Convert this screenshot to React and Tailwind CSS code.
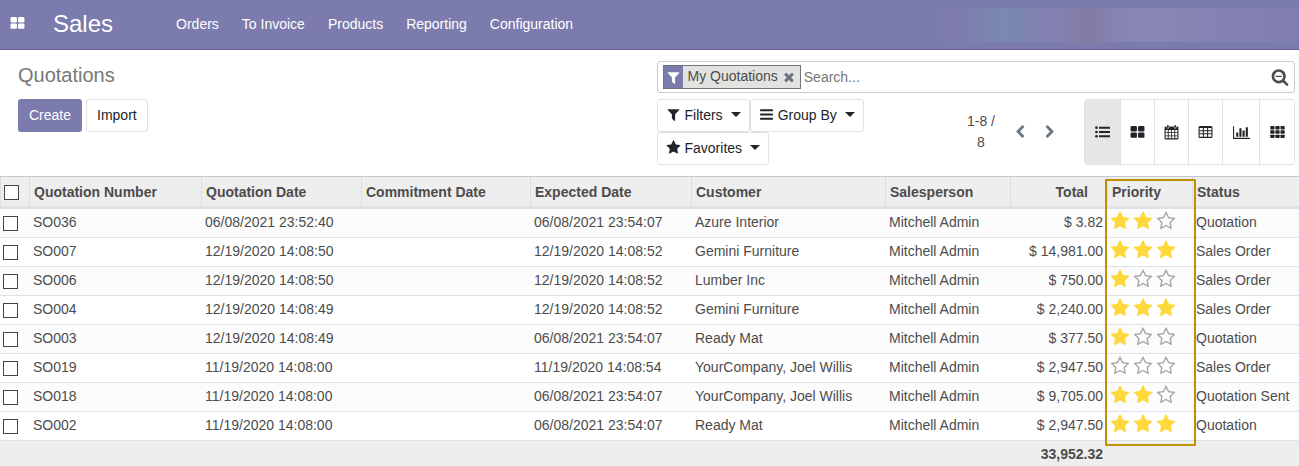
import React from "react";

const PATHS = {
  thLarge:
    "M832 1024v384q0 52-38 90t-90 38h-512q-52 0-90-38t-38-90v-384q0-52 38-90t90-38h512q52 0 90 38t38 90zm0-768v384q0 52-38 90t-90 38h-512q-52 0-90-38t-38-90v-384q0-52 38-90t90-38h512q52 0 90 38t38 90zm896 768v384q0 52-38 90t-90 38h-512q-52 0-90-38t-38-90v-384q0-52 38-90t90-38h512q52 0 90 38t38 90zm0-768v384q0 52-38 90t-90 38h-512q-52 0-90-38t-38-90v-384q0-52 38-90t90-38h512q52 0 90 38t38 90z",
  star: "M1728 647q0 22-26 48l-363 354 86 500q1 7 1 20 0 21-10.500 35.500t-30.500 14.500q-19 0-40-12l-449-236-449 236q-22 12-40 12-21 0-31.500-14.500t-10.500-35.500q0-6 2-20l86-500-364-354q-25-27-25-48 0-37 56-46l502-73 225-455q19-41 49-41t49 41l225 455 502 73q56 9 56 46z",
  starO:
    "M1201 1004l306-297-422-62-189-382-189 382-422 62 306 297-73 421 378-199 377 199zm527-357q0 22-26 48l-363 354 86 500q1 7 1 20 0 50-41 50-19 0-40-12l-449-236-449 236q-22 12-40 12-21 0-31.500-14.500t-10.500-35.500q0-6 2-20l86-500-364-354q-25-27-25-48 0-37 56-46l502-73 225-455q19-41 49-41t49 41l225 455 502 73q56 9 56 46z",
  filter:
    "M1595 295q17 41-14 70l-493 493v742q0 42-39 59-13 5-25 5-27 0-45-19l-256-256q-19-19-19-45v-486l-493-493q-31-29-14-70 17-39 59-39h1280q42 0 59 39z",
  times:
    "M1490 1322q0 40-28 68l-136 136q-28 28-68 28t-68-28l-294-294-294 294q-28 28-68 28t-68-28l-136-136q-28-28-28-68t28-68l294-294-294-294q-28-28-28-68t28-68l136-136q28-28 68-28t68 28l294 294 294-294q28-28 68-28t68 28l136 136q28 28 28 68t-28 68l-294 294 294 294q28 28 28 68z",
  searchMinus:
    "M1088 800v64q0 13-9.500 22.500t-22.500 9.500h-576q-13 0-22.500-9.500t-9.500-22.500v-64q0-13 9.500-22.500t22.500-9.500h576q13 0 22.500 9.500t9.500 22.500zm128 32q0-185-131.500-316.500t-316.500-131.500-316.500 131.500-131.500 316.500 131.500 316.500 316.500 131.500 316.500-131.500 131.500-316.500zm512 832q0 53-37.500 90.500t-90.500 37.500q-54 0-90-38l-343-342q-179 124-399 124-143 0-273.500-55.500t-225-150-150-225-55.500-273.500 55.500-273.500 150-225 225-150 273.500-55.500 273.500 55.500 225 150 150 225 55.500 273.500q0 220-124 399l343 343q37 37 37 90z",
  left: "M1427 301l-531 531 531 531q19 19 19 45t-19 45l-166 166q-19 19-45 19t-45-19l-742-742q-19-19-19-45t19-45l742-742q19-19 45-19t45 19l166 166q19 19 19 45t-19 45z",
  right:
    "M1363 877l-742 742q-19 19-45 19t-45-19l-166-166q-19-19-19-45t19-45l531-531-531-531q-19-19-19-45t19-45l166-166q19-19 45-19t45 19l742 742q19 19 19 45t-19 45z",
};

function Icon({ name, className = "", children }) {
  return (
    <svg viewBox="0 0 1792 1792" fill="currentColor" aria-hidden="true" className={"shrink-0 overflow-visible " + className}>
      {name ? <path d={PATHS[name]} /> : children}
    </svg>
  );
}

const BarsIcon = () => (
  <Icon className="size-[15px]">
    {[256, 768, 1280].map((y) => (
      <rect key={y} x="128" y={y} width="1536" height="256" rx="64" />
    ))}
  </Icon>
);

const ListIcon = () => (
  <Icon className="size-[15px]">
    {[320, 832, 1344].map((y) => (
      <g key={y}>
        <circle cx="176" cy={y} r="160" />
        <rect x="480" y={y - 120} width="1312" height="240" rx="32" />
      </g>
    ))}
  </Icon>
);

const CalendarIcon = () => (
  <Icon className="size-[15px]">
    <path
      fillRule="evenodd"
      d="M192 192h1408q52 0 90 38t38 90v1280q0 52-38 90t-90 38h-1408q-52 0-90-38t-38-90v-1280q0-52 38-90t90-38zM192 600v276h260v-276zM556 600v276h292v-276zM944 600v276h292v-276zM1340 600v276h260v-276zM192 970v270h260v-270zM556 970v270h292v-270zM944 970v270h292v-270zM1340 970v270h260v-270zM192 1334v260h260v-260zM556 1334v260h292v-260zM944 1334v260h292v-260zM1340 1334v260h260v-260z"
    />
    {[368, 1232].map((x) => (
      <g key={x}>
        <rect x={x - 50} y="-50" width="292" height="470" rx="146" className="fill-white" />
        <rect x={x} y="0" width="192" height="360" rx="96" />
      </g>
    ))}
  </Icon>
);

const TableIcon = () => (
  <Icon className="size-[15px]">
    <path
      fillRule="evenodd"
      d="M224 120h1344q66 0 113 47t47 113v1120q0 66-47 113t-113 47h-1344q-66 0-113-47t-47-113v-1120q0-66 47-113t113-47zM192 370v250h384v-250zM704 370v250h384v-250zM1216 370v250h384v-250zM192 740v250h384v-250zM704 740v250h384v-250zM1216 740v250h384v-250zM192 1110v300h384v-300zM704 1110v300h384v-300zM1216 1110v300h384v-300z"
    />
  </Icon>
);

const ChartIcon = () => (
  <svg viewBox="0 0 2048 1792" fill="currentColor" aria-hidden="true" className="h-[15px] w-[17px] shrink-0">
    <path d="M640 896v512h-256v-512zM1024 384v1024h-256v-1024zM2048 1536v128h-2048v-1536h128v1408zM1408 640v768h-256v-768zM1792 256v1152h-256v-1152z" />
  </svg>
);

const GridIcon = () => (
  <Icon className="size-[15px]">
    {[128, 640, 1152].map((y) =>
      [32, 640, 1248].map((x) => <rect key={x + "-" + y} x={x} y={y} width="512" height="400" rx="80" />)
    )}
  </Icon>
);

const Caret = () => (
  <svg viewBox="0 0 10 5" fill="currentColor" aria-hidden="true" className="ml-1 h-[5px] w-[10px]">
    <path d="M0 0h10l-5 5z" />
  </svg>
);

const VIEWS = [
  ["List", ListIcon, "w-[35px] bg-[#e6e6e6]"],
  ["Kanban", () => <Icon name="thLarge" className="size-[15px]" />, "w-[34px]"],
  ["Calendar", CalendarIcon, "w-[34px]"],
  ["Pivot", TableIcon, "w-[34px]"],
  ["Graph", ChartIcon, "w-[37px]"],
  ["Activity", GridIcon, "w-[35px]"],
];

const ROWS = [
  ["SO036", "06/08/2021 23:52:40", "06/08/2021 23:54:07", "Azure Interior", "$ 3.82", 2, "Quotation"],
  ["SO007", "12/19/2020 14:08:50", "12/19/2020 14:08:52", "Gemini Furniture", "$ 14,981.00", 3, "Sales Order"],
  ["SO006", "12/19/2020 14:08:50", "12/19/2020 14:08:52", "Lumber Inc", "$ 750.00", 1, "Sales Order"],
  ["SO004", "12/19/2020 14:08:49", "12/19/2020 14:08:52", "Gemini Furniture", "$ 2,240.00", 3, "Sales Order"],
  ["SO003", "12/19/2020 14:08:49", "06/08/2021 23:54:07", "Ready Mat", "$ 377.50", 1, "Quotation"],
  ["SO019", "11/19/2020 14:08:00", "11/19/2020 14:08:54", "YourCompany, Joel Willis", "$ 2,947.50", 0, "Sales Order"],
  ["SO018", "11/19/2020 14:08:00", "06/08/2021 23:54:07", "YourCompany, Joel Willis", "$ 9,705.00", 2, "Quotation Sent"],
  ["SO002", "11/19/2020 14:08:00", "06/08/2021 23:54:07", "Ready Mat", "$ 2,947.50", 3, "Quotation"],
];

const HEADINGS = [
  "Quotation Number",
  "Quotation Date",
  "Commitment Date",
  "Expected Date",
  "Customer",
  "Salesperson",
  "Total",
  "Priority",
  "Status",
];

const TH = "h-8 border-l border-b-[3px] border-l-[#dcdddf] border-b-[#dee2e6] px-1 whitespace-nowrap";
const TD = "h-[29px] border-b border-[#dee2e6] px-1 pt-0 pb-[2px] whitespace-nowrap";
const BOX = "block size-[15px] appearance-none border border-[#444] bg-white checked:bg-[#7c7bad]";
const DROP =
  "flex h-[33px] items-center gap-1 rounded-[3px] border border-[#dee2e6] bg-white px-2 pb-[2px] text-[#212529]";

function Stars({ value }) {
  return (
    <div className="flex gap-[3px]">
      {[1, 2, 3].map((n) => (
        <button
          key={n}
          type="button"
          aria-label={`Priority ${n}`}
          className={n <= value ? "text-[#ffd83b]" : "text-[#a8a8a8]"}
        >
          <Icon name={n <= value ? "star" : "starO"} className="block size-5" />
        </button>
      ))}
    </div>
  );
}

function NavBar() {
  return (
    <header className="flex h-[50px] items-center border-b border-[#5f5e97] bg-[#7c7bad] pb-[2px] text-white">
      <button type="button" aria-label="Applications" className="ml-[10px]">
        <Icon name="thLarge" className="block size-[15px]" />
      </button>
      <a href="#sales" className="ml-7 text-2xl">
        Sales
      </a>
      <nav className="ml-[63px] flex gap-[23px]">
        {["Orders", "To Invoice", "Products", "Reporting", "Configuration"].map((t) => (
          <a key={t} href="#menu">
            {t}
          </a>
        ))}
      </nav>
      <div className="mt-[3px] ml-auto flex h-[34px] w-[368px] bg-linear-to-r from-[#7c7bad] via-[#8886b5] via-60% to-[#7f7eaf]">
        <div className="ml-9 h-full w-[76px] bg-linear-to-r from-transparent via-[#758db0]/80 to-transparent" />
        <div className="ml-3 h-full w-[64px] bg-linear-to-r from-transparent via-[#807a9c]/80 to-transparent" />
      </div>
    </header>
  );
}

function ControlPanel() {
  return (
    <section className="grid grid-cols-2 items-start pt-[11px] pb-[11px]">
      <div className="pl-[18px]">
        <h1 className="text-xl leading-7 text-[#777]">Quotations</h1>
        <div className="mt-[10px] flex gap-1">
          <button type="button" className="h-[33px] rounded-[3px] bg-[#7c7bad] px-[11px] pb-[2px] text-white">
            Create
          </button>
          <button
            type="button"
            className="h-[33px] rounded-[3px] border border-[#dee2e6] bg-white px-[10px] pb-[2px] text-[#212529]"
          >
            Import
          </button>
        </div>
      </div>
      <div className="pr-1 pl-[7px]">
        <div className="flex h-8 items-center rounded-[3px] border border-[#ccc] pr-[5px] pl-[5px]">
          <div className="flex h-6 items-center border border-[#6c757d] bg-[#e2e2e0] pr-1">
            <span className="flex h-full w-[19px] items-center justify-center bg-[#7c7bad] text-white">
              <Icon name="filter" className="size-[15px]" />
            </span>
            <span className="ml-[5px] pb-[2px]">My Quotations</span>
            <button type="button" aria-label="Remove filter" className="ml-1 text-[#6c757d]">
              <Icon name="times" className="block size-[14px]" />
            </button>
          </div>
          <input
            type="text"
            aria-label="Search"
            placeholder="Search..."
            className="ml-[3px] min-w-0 flex-1 bg-transparent outline-none placeholder:text-[#757575]"
          />
          <button type="button" aria-label="Search options">
            <Icon name="searchMinus" className="block size-[18px]" />
          </button>
        </div>
        <div className="mt-[6px] flex">
          <div className="flex w-[296px] flex-wrap content-start">
            <button type="button" className={DROP}>
              <Icon name="filter" className="size-[15px]" />
              Filters
              <Caret />
            </button>
            <button type="button" className={DROP}>
              <BarsIcon />
              Group By
              <Caret />
            </button>
            <button type="button" className={DROP}>
              <Icon name="star" className="size-[15px]" />
              Favorites
              <Caret />
            </button>
          </div>
          <div className="ml-auto flex items-center">
            <span className="w-8 text-center leading-[21px]">1-8 / 8</span>
            <button type="button" aria-label="Previous" className="ml-4 text-[#6c757d]">
              <Icon name="left" className="block size-[14px]" />
            </button>
            <button type="button" aria-label="Next" className="ml-4 text-[#6c757d]">
              <Icon name="right" className="block size-[14px]" />
            </button>
          </div>
          <div className="ml-[27px] flex h-[66px] overflow-hidden rounded-[3px] border border-[#dee2e6] text-[#212529]">
            {VIEWS.map(([label, Glyph, cls], i) => (
              <button
                key={label}
                type="button"
                aria-label={label}
                className={"flex items-center justify-center border-[#dee2e6] " + (i ? "border-l " : "") + cls}
              >
                <Glyph />
              </button>
            ))}
          </div>
        </div>
      </div>
    </section>
  );
}

export default function App() {
  return (
    <div className="bg-white font-['Liberation_Sans',Arial,sans-serif] text-sm text-[#4c4c4c]">
      <NavBar />
      <ControlPanel />
      <main className="relative border-t border-[#c8c9cc]">
        <table className="w-full table-fixed border-separate border-spacing-0">
          <colgroup>
            <col className="w-[29px]" />
            <col className="w-[172px]" />
            <col className="w-[160px]" />
            <col className="w-[169px]" />
            <col className="w-[161px]" />
            <col className="w-[194px]" />
            <col className="w-[125px]" />
            <col className="w-[97px]" />
            <col className="w-[85px]" />
            <col />
          </colgroup>
          <thead className="bg-[#eee] text-left">
            <tr>
              <th className="h-8 border-b-[3px] border-l border-b-[#dee2e6] border-l-[#dcdddf] pt-[2px] pl-[3px]">
                <input type="checkbox" aria-label="Select all" className={BOX} />
              </th>
              {HEADINGS.map((h) => (
                <th key={h} className={TH}>
                  {h === "Total" ? <span className="block pr-[15px] text-right">{h}</span> : h}
                </th>
              ))}
            </tr>
          </thead>
          <tbody>
            {ROWS.map(([id, date, expected, customer, total, stars, status]) => (
              <tr key={id} className="odd:bg-[#fcfcfc]">
                <td className="h-[29px] border-b border-[#dee2e6] pt-0 pb-0 pl-[3px]">
                  <input type="checkbox" aria-label={`Select ${id}`} className={BOX} />
                </td>
                <td className={TD}>{id}</td>
                <td className={TD}>{date}</td>
                <td className={TD} />
                <td className={TD}>{expected}</td>
                <td className={TD}>{customer}</td>
                <td className={TD}>Mitchell Admin</td>
                <td className={TD + " text-right"}>{total}</td>
                <td className="h-[29px] border-b border-[#dee2e6] pt-0 pb-1 pl-[3px]">
                  <Stars value={stars} />
                </td>
                <td className={TD}>{status}</td>
              </tr>
            ))}
          </tbody>
          <tfoot className="bg-[#eee] font-bold">
            <tr>
              <td colSpan={7} />
              <td className="h-[25px] px-1 py-0 text-right">33,952.32</td>
              <td colSpan={2} />
            </tr>
          </tfoot>
        </table>
        <div className="pointer-events-none absolute top-[2px] bottom-5 left-[1105px] w-[91px] rounded-[1px] border-2 border-[#bf9000]" />
      </main>
    </div>
  );
}
